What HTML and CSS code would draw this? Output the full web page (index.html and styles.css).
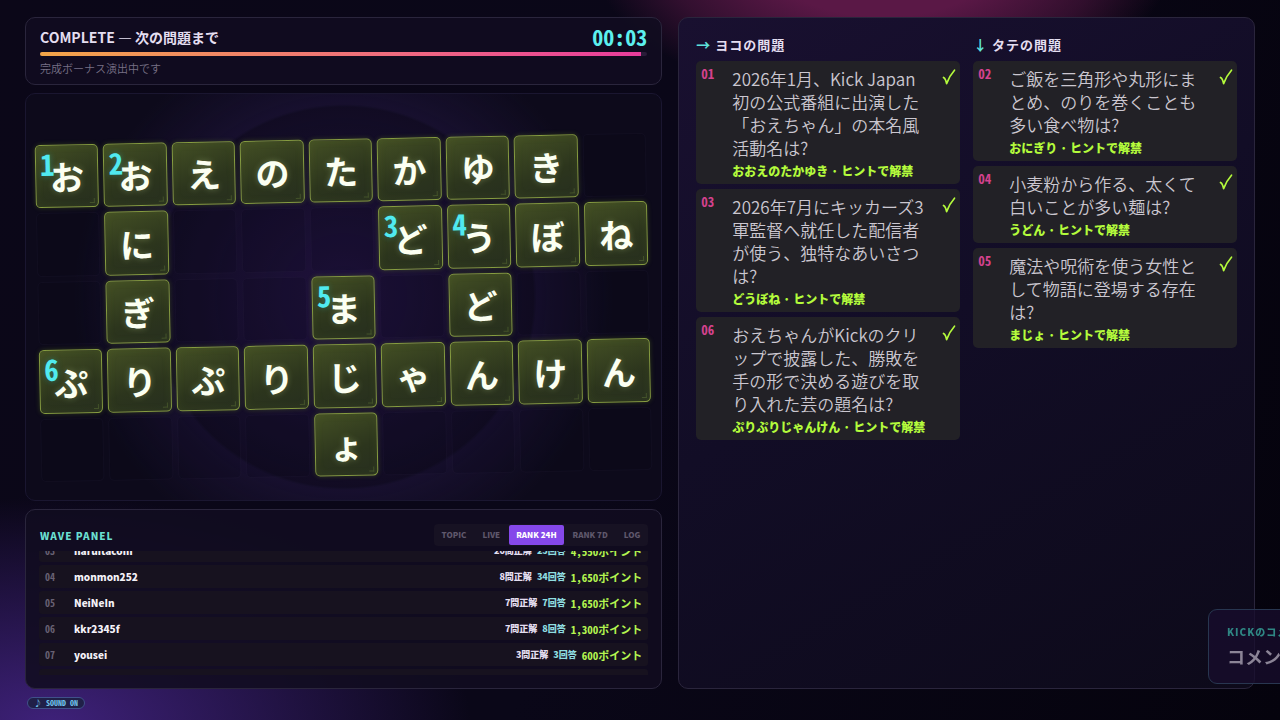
FILE: index.html
```
<!DOCTYPE html>
<html lang="ja">
<head>
    <meta charset="UTF-8">
    <meta name="viewport" content="width=device-width, initial-scale=1.0">
    <title>Crossword</title>
    <link rel="stylesheet" href="styles.css">
</head>
<body>
    <svg class="defs" width="0" height="0">
        <symbol id="check" viewBox="0 0 14 18">
            <path d="M1.5 9.5 Q3.6 10.5 4.6 15.6 Q7.6 7.6 12.5 2.2" fill="none" stroke="currentColor" stroke-width="1.7" stroke-linecap="round" stroke-linejoin="round"/>
        </symbol>
    </svg>

    <main class="stage">
        <div class="left">
            <header class="panel status">
                <div class="status-top">
                    <h1>COMPLETE — 次の問題まで</h1>
                    <time class="clock">00:03</time>
                </div>
                <div class="bar"><div class="bar-fill" style="width: 99%"></div></div>
                <p>完成ボーナス演出中です</p>
            </header>

            <section class="panel board">
                <div class="grid">
                    <div class="cell on"><span class="num">1</span>お</div>
                    <div class="cell on"><span class="num">2</span>お</div>
                    <div class="cell on">え</div>
                    <div class="cell on">の</div>
                    <div class="cell on">た</div>
                    <div class="cell on">か</div>
                    <div class="cell on">ゆ</div>
                    <div class="cell on">き</div>
                    <div class="cell"></div>

                    <div class="cell"></div>
                    <div class="cell on">に</div>
                    <div class="cell"></div>
                    <div class="cell"></div>
                    <div class="cell"></div>
                    <div class="cell on"><span class="num">3</span>ど</div>
                    <div class="cell on"><span class="num">4</span>う</div>
                    <div class="cell on">ぼ</div>
                    <div class="cell on">ね</div>

                    <div class="cell"></div>
                    <div class="cell on">ぎ</div>
                    <div class="cell"></div>
                    <div class="cell"></div>
                    <div class="cell on"><span class="num">5</span>ま</div>
                    <div class="cell"></div>
                    <div class="cell on">ど</div>
                    <div class="cell"></div>
                    <div class="cell"></div>

                    <div class="cell on"><span class="num">6</span>ぷ</div>
                    <div class="cell on">り</div>
                    <div class="cell on">ぷ</div>
                    <div class="cell on">り</div>
                    <div class="cell on">じ</div>
                    <div class="cell on">ゃ</div>
                    <div class="cell on">ん</div>
                    <div class="cell on">け</div>
                    <div class="cell on">ん</div>

                    <div class="cell"></div>
                    <div class="cell"></div>
                    <div class="cell"></div>
                    <div class="cell"></div>
                    <div class="cell on">ょ</div>
                    <div class="cell"></div>
                    <div class="cell"></div>
                    <div class="cell"></div>
                    <div class="cell"></div>
                </div>
            </section>

            <section class="panel wave">
                <div class="wave-top">
                    <h2>WAVE PANEL</h2>
                    <nav class="tabs">
                        <button type="button">TOPIC</button>
                        <button type="button">LIVE</button>
                        <button type="button" class="active">RANK 24H</button>
                        <button type="button">RANK 7D</button>
                        <button type="button">LOG</button>
                    </nav>
                </div>
                <div class="rank-window">
                    <ol class="rank">
                        <li><span class="pos">03</span><b class="name">naruitacom</b><span class="hit">20問正解</span><span class="ans">25回答</span><span class="pt">4,550ポイント</span></li>
                        <li><span class="pos">04</span><b class="name">monmon252</b><span class="hit">8問正解</span><span class="ans">34回答</span><span class="pt">1,650ポイント</span></li>
                        <li><span class="pos">05</span><b class="name">NeiNeIn</b><span class="hit">7問正解</span><span class="ans">7回答</span><span class="pt">1,650ポイント</span></li>
                        <li><span class="pos">06</span><b class="name">kkr2345f</b><span class="hit">7問正解</span><span class="ans">8回答</span><span class="pt">1,300ポイント</span></li>
                        <li><span class="pos">07</span><b class="name">yousei</b><span class="hit">3問正解</span><span class="ans">3回答</span><span class="pt">600ポイント</span></li>
                        <li></li>
                    </ol>
                </div>
            </section>
        </div>

        <section class="panel clues">
            <div class="clue-col">
                <h2><span class="arrow">→</span> ヨコの問題</h2>
                <article class="clue">
                    <span class="no">01</span>
                    <div>
                        <p>2026年1月、Kick Japan初の公式番組に出演した「おえちゃん」の本名風活動名は?</p>
                        <strong>おおえのたかゆき · ヒントで解禁</strong>
                    </div>
                    <svg class="check"><use href="#check"/></svg>
                </article>
                <article class="clue">
                    <span class="no">03</span>
                    <div>
                        <p>2026年7月にキッカーズ3軍監督へ就任した配信者が使う、独特なあいさつは?</p>
                        <strong>どうぼね · ヒントで解禁</strong>
                    </div>
                    <svg class="check"><use href="#check"/></svg>
                </article>
                <article class="clue">
                    <span class="no">06</span>
                    <div>
                        <p>おえちゃんがKickのクリップで披露した、勝敗を手の形で決める遊びを取り入れた芸の題名は?</p>
                        <strong>ぷりぷりじゃんけん · ヒントで解禁</strong>
                    </div>
                    <svg class="check"><use href="#check"/></svg>
                </article>
            </div>
            <div class="clue-col">
                <h2><span class="arrow">↓</span> タテの問題</h2>
                <article class="clue">
                    <span class="no">02</span>
                    <div>
                        <p>ご飯を三角形や丸形にまとめ、のりを巻くことも多い食べ物は?</p>
                        <strong>おにぎり · ヒントで解禁</strong>
                    </div>
                    <svg class="check"><use href="#check"/></svg>
                </article>
                <article class="clue">
                    <span class="no">04</span>
                    <div>
                        <p>小麦粉から作る、太くて白いことが多い麺は?</p>
                        <strong>うどん · ヒントで解禁</strong>
                    </div>
                    <svg class="check"><use href="#check"/></svg>
                </article>
                <article class="clue">
                    <span class="no">05</span>
                    <div>
                        <p>魔法や呪術を使う女性として物語に登場する存在は?</p>
                        <strong>まじょ · ヒントで解禁</strong>
                    </div>
                    <svg class="check"><use href="#check"/></svg>
                </article>
            </div>
        </section>
    </main>

    <footer>
        <button type="button" class="sound">♪ SOUND ON</button>
    </footer>

    <aside class="toast">
        <small>KICKのコメント</small>
        <b>コメント</b>
    </aside>
</body>
</html>
```

FILE: styles.css
```
*{
    box-sizing: border-box;
    margin: 0;
    padding: 0;
}

body{
    height: 100vh;
    overflow: hidden;
    display: flex;
    flex-direction: column;
    padding: 17px 25px 0;
    color: #e4def0;
    font-family: "Noto Sans CJK JP", sans-serif;
    background:
        radial-gradient(ellipse 290px 150px at 69% -6%, #5a1846 40%, rgba(90, 24, 70, 0.5) 75%, transparent),
        radial-gradient(ellipse 420px 230px at 4% 101%, rgba(72, 38, 140, 0.85), transparent),
        linear-gradient(110deg, #0b0718, #0a0718 50%, #05030d);
}

button{
    border: none;
    background: none;
    font-family: inherit;
    font-weight: 900;
    cursor: pointer;
}

.defs{
    position: absolute;
}

.stage{
    flex: 1;
    min-height: 0;
    display: grid;
    grid-template-columns: 21fr 19fr;
    gap: 16px;
}

.left{
    min-height: 0;
    display: flex;
    flex-direction: column;
    gap: 8px;
}

.panel{
    border: 1px solid #2a253c;
    border-radius: 10px;
    background-color: rgba(17, 12, 32, 0.88);
}

/* countdown */
.status{
    padding: 8px 14px 6px;
}
.status-top{
    display: flex;
    align-items: flex-start;
    justify-content: space-between;
    height: 26px;
}
.status h1{
    font-size: 14px;
    line-height: 22px;
}
.clock{
    color: #5cf0ee;
    font-family: "Noto Sans Mono CJK JP", "Noto Sans CJK JP", monospace;
    font-size: 22px;
    font-weight: 700;
    line-height: 20px;
}
.bar{
    height: 4px;
    border-radius: 2px;
    background-color: #2a1c38;
    overflow: hidden;
}
.bar-fill{
    height: 100%;
    background: linear-gradient(90deg, #f2a548, #f06a80 60%, #e83c9c);
}
.status p{
    margin-top: 3px;
    color: #777085;
    font-size: 11px;
    font-weight: 350;
    line-height: 19px;
}

/* board */
.board{
    flex: 1;
    min-height: 0;
    display: flex;
    align-items: center;
    padding: 34px 12px 12px;
    border-color: #1a1630;
    background:
        radial-gradient(circle at 50% 50%, rgba(46, 24, 88, 0.55), rgba(30, 18, 60, 0.25) 190px, rgba(38, 24, 74, 0.4) 193px, transparent 270px),
        #0d0a1b;
}
.grid{
    width: 100%;
    display: grid;
    grid-template-columns: repeat(9, 1fr);
    gap: 5px;
    transform: rotate(-1.15deg);
}
.cell{
    position: relative;
    aspect-ratio: 1;
    display: flex;
    align-items: center;
    justify-content: center;
    border: 1px solid rgba(130, 110, 180, 0.05);
    border-radius: 5px;
    background-color: rgba(10, 8, 20, 0.15);
    font-size: 34px;
    font-weight: 700;
}
.cell.on{
    border-color: #869c40;
    color: #fbfff2;
    background: linear-gradient(160deg, #434f24, #2c351d 60%, #272f1f);
    box-shadow: 0 0 5px rgba(120, 160, 30, 0.3), inset 0 0 8px rgba(120, 145, 50, 0.12);
    text-shadow: 0 0 6px rgba(220, 240, 160, 0.3);
}
.cell.on::after{
    content: "";
    position: absolute;
    right: 3px;
    bottom: 3px;
    width: 4px;
    height: 4px;
    border-right: 1px solid #43522a;
    border-bottom: 1px solid #43522a;
}
.num{
    position: absolute;
    top: 2px;
    left: 4px;
    color: #50eaf0;
    font-family: "Noto Sans Mono CJK JP", "Noto Sans CJK JP", monospace;
    font-size: 29px;
    line-height: 30px;
    text-shadow: 0 0 6px rgba(40, 220, 240, 0.3);
}

/* ranking */
.wave{
    height: 180px;
    padding: 14px 13px;
}
.wave-top{
    display: flex;
    align-items: center;
    justify-content: space-between;
    height: 22px;
    margin-bottom: 5px;
}
.wave h2{
    padding-left: 1px;
    color: #6adfd0;
    font-size: 10px;
    font-weight: 900;
    letter-spacing: 1px;
}
.tabs{
    display: flex;
    gap: 2px;
    padding: 1px;
    border-radius: 4px;
    background-color: #171223;
}
.tabs button{
    padding: 0 7px;
    border-radius: 2px;
    color: #5f586c;
    font-size: 8px;
    line-height: 20px;
}
.tabs .active{
    color: #fff;
    background-color: #8548ea;
}
.rank-window{
    height: 124px;
    overflow: hidden;
}
.rank{
    display: flex;
    flex-direction: column;
    gap: 3px;
    margin-top: -12px;
    list-style: none;
}
.rank li{
    display: flex;
    align-items: center;
    gap: 5px;
    flex: none;
    height: 23px;
    padding: 0 6px;
    border-radius: 3px;
    background-color: #17121f;
    font-weight: 900;
}
.pos{
    width: 24px;
    color: #686173;
    font-family: "Noto Sans Mono CJK JP", "Noto Sans CJK JP", monospace;
    font-size: 10px;
    font-weight: 700;
}
.name{
    flex: 1;
    color: #f4f1f8;
    font-size: 10px;
}
.hit, .ans{
    font-size: 9px;
}
.ans{
    color: #8fdde0;
}
.pt{
    color: #b4f550;
    font-family: "Noto Sans Mono CJK JP", "Noto Sans CJK JP", monospace;
    font-size: 11px;
}

/* clues */
.clues{
    display: grid;
    grid-template-columns: 1fr 1fr;
    gap: 13px;
    padding: 16px 17px;
    background: linear-gradient(150deg, #191030, #120d26 45%, #0d0a1a);
}
.clue-col{
    display: flex;
    flex-direction: column;
    gap: 5px;
}
.clue-col h2{
    height: 22px;
    font-size: 13px;
    line-height: 20px;
    letter-spacing: 1px;
}
.arrow{
    color: #5fe3dc;
    font-size: 14px;
}
.clue{
    display: grid;
    grid-template-columns: 26px 1fr 14px;
    gap: 5px;
    padding: 6px 4px 3px 5px;
    border-radius: 5px;
    background-color: #222126;
}
.no{
    color: #d4428e;
    font-family: "Noto Sans Mono CJK JP", "Noto Sans CJK JP", monospace;
    font-size: 13px;
    font-weight: 700;
    line-height: 14px;
}
.clue p{
    padding-right: 8px;
    color: #cbc7d0;
    font-size: 17px;
    font-weight: 350;
    line-height: 23px;
}
.clue strong{
    display: block;
    margin-top: 2px;
    color: #b4fb3c;
    font-size: 12px;
    font-weight: 900;
    line-height: 20px;
}
.check{
    width: 14px;
    height: 18px;
    margin-top: 1px;
    color: #b4fb3c;
}

footer{
    flex: none;
    height: 31px;
    padding: 8px 2px;
    line-height: 0;
}
.sound{
    height: 12px;
    padding: 0 6px;
    border: 1px solid #40508a;
    border-radius: 6px;
    color: #72c4ec;
    background-color: #202048;
    font-family: "Noto Sans Mono CJK JP", "Noto Sans CJK JP", monospace;
    font-size: 8px;
    line-height: 10px;
}

/* comment card sliding in from the right edge */
.toast{
    position: fixed;
    right: -128px;
    bottom: 36px;
    width: 200px;
    height: 75px;
    padding: 14px 18px;
    border: 1px solid #283650;
    border-radius: 9px;
    background-color: rgba(24, 14, 46, 0.75);
}
.toast small{
    display: block;
    color: #2f8683;
    font-size: 10px;
    font-weight: 900;
    line-height: 16px;
    letter-spacing: 1px;
}
.toast b{
    display: block;
    color: #8b8496;
    font-size: 18px;
    line-height: 32px;
}
```
